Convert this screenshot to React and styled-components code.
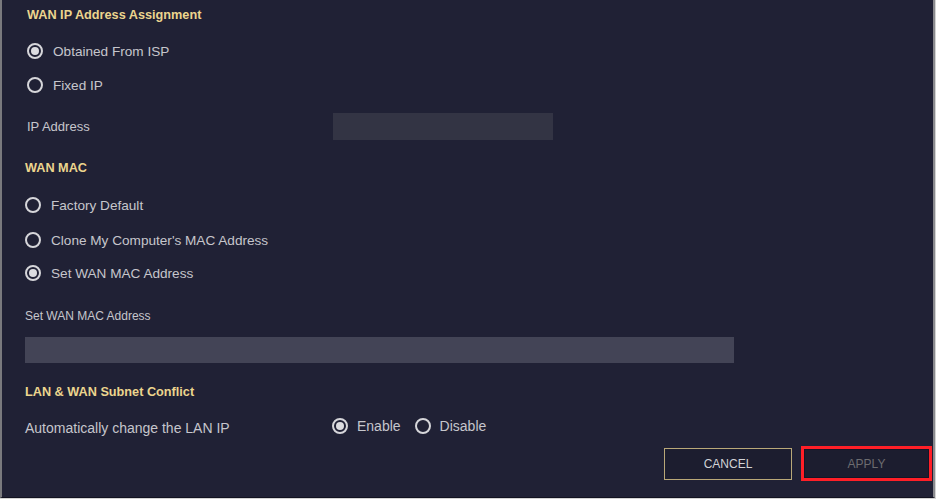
import React from "react";
import styled, { createGlobalStyle } from "styled-components";

const Global = createGlobalStyle`
  html, body { margin: 0; padding: 0; background: #ffffff; }
  body { font-family: "Liberation Sans", Arial, sans-serif; }
`;

const Frame = styled.div`
  width: 936px;
  height: 499px;
  box-sizing: border-box;
  background: #d4d4d4;
  padding: 0 1px 1px 0;
`;

const Panel = styled.div`
  height: 100%;
  box-sizing: border-box;
  background: #202135;
  border-left: 2px solid #7a7a7e;
  border-right: 2px solid #8a8a8e;
  border-bottom: 1px solid #121220;
  padding: 1px 1px 0 23px;
  display: flex;
  flex-direction: column;
`;

const Section = styled.div`
  display: flex;
  flex-direction: column;
  padding-left: ${(p) => p.$indent || 0}px;
`;

const Heading = styled.div`
  height: 28px;
  margin-top: ${(p) => p.$mt || 0}px;
  display: flex;
  align-items: center;
  font-size: 12.7px;
  font-weight: bold;
  color: #ecd58e;
`;

const RadioRow = styled.label`
  height: 28px;
  margin-top: ${(p) => p.$mt || 0}px;
  display: flex;
  align-items: center;
  gap: 10px;
  font-size: 13.6px;
  color: #c6c6cc;
`;

const Circle = styled.span`
  width: 16px;
  height: 16px;
  box-sizing: border-box;
  border: 2px solid #d6d6da;
  border-radius: 50%;
  display: flex;
  align-items: center;
  justify-content: center;
  flex-shrink: 0;
  &::after {
    content: "";
    width: 8px;
    height: 8px;
    border-radius: 50%;
    background: #dcdce0;
    display: ${(p) => (p.$on ? "block" : "none")};
  }
`;

const FieldRow = styled.div`
  height: 28px;
  margin-top: ${(p) => p.$mt || 0}px;
  display: flex;
  align-items: center;
`;

const FieldLabel = styled.div`
  width: ${(p) => p.$w || 306}px;
  font-size: ${(p) => p.$fs || 13}px;
  color: #c6c6cc;
  padding-top: ${(p) => p.$pt || 1}px;
`;

const Input = styled.div`
  width: ${(p) => p.$w}px;
  height: ${(p) => p.$h}px;
  margin-top: ${(p) => p.$mt || 0}px;
  background: ${(p) => p.$bg};
  box-sizing: border-box;
`;

const SmallLabel = styled.div`
  height: 20px;
  margin-top: ${(p) => p.$mt || 0}px;
  display: flex;
  align-items: center;
  font-size: 12px;
  color: #c6c6cc;
`;

const Inline = styled.div`
  display: flex;
  align-items: center;
  gap: 14px;
`;

const InlineRadio = styled.label`
  display: flex;
  align-items: center;
  gap: 9px;
  font-size: 14px;
  color: #c6c6cc;
`;

const ButtonBar = styled.div`
  margin-top: ${(p) => p.$mt || 0}px;
  display: flex;
  justify-content: flex-end;
  align-items: center;
  gap: 9px;
`;

const Button = styled.button`
  width: 128px;
  height: 32px;
  background: #1c1d2f;
  border: 1px solid #b9a878;
  color: #d2d2d6;
  font-family: "Liberation Sans", Arial, sans-serif;
  font-size: 12px;
  padding: 0;
  cursor: pointer;
`;

const Highlight = styled.div`
  width: 131px;
  height: 35px;
  box-sizing: border-box;
  border: 3px solid #ff1f27;
  display: flex;
`;

const ApplyButton = styled.button`
  flex: 1;
  background: #1c1d2f;
  border: 1px solid #141526;
  color: #6c6c70;
  font-family: "Liberation Sans", Arial, sans-serif;
  font-size: 12px;
  padding: 0;
`;

const Radio = ({ on, children, mt }) => (
  <RadioRow $mt={mt}>
    <Circle $on={on} />
    {children}
  </RadioRow>
);

export default function App() {
  return (
    <>
      <Global />
      <Frame>
        <Panel>
          <Section $indent={2}>
            <Heading>WAN IP Address Assignment</Heading>
            <Radio on mt={8}>Obtained From ISP</Radio>
            <Radio mt={6}>Fixed IP</Radio>
            <FieldRow $mt={13}>
              <FieldLabel>IP Address</FieldLabel>
              <Input $w={220} $h={27} $bg="#333444" />
            </FieldRow>
          </Section>
          <Section>
            <Heading $mt={14}>WAN MAC</Heading>
            <Radio mt={9}>Factory Default</Radio>
            <Radio mt={7}>Clone My Computer's MAC Address</Radio>
            <Radio on mt={5}>Set WAN MAC Address</Radio>
            <SmallLabel $mt={19}>Set WAN MAC Address</SmallLabel>
            <Input $w={709} $h={26} $mt={11} $bg="#434456" />
            <Heading $mt={15}>LAN &amp; WAN Subnet Conflict</Heading>
            <FieldRow $mt={6}>
              <FieldLabel $w={307} $pt={4} $fs={14}>
                Automatically change the LAN IP
              </FieldLabel>
              <Inline>
                <InlineRadio>
                  <Circle $on />
                  Enable
                </InlineRadio>
                <InlineRadio>
                  <Circle />
                  Disable
                </InlineRadio>
              </Inline>
            </FieldRow>
            <ButtonBar $mt={6}>
              <Button>CANCEL</Button>
              <Highlight>
                <ApplyButton>APPLY</ApplyButton>
              </Highlight>
            </ButtonBar>
          </Section>
        </Panel>
      </Frame>
    </>
  );
}
